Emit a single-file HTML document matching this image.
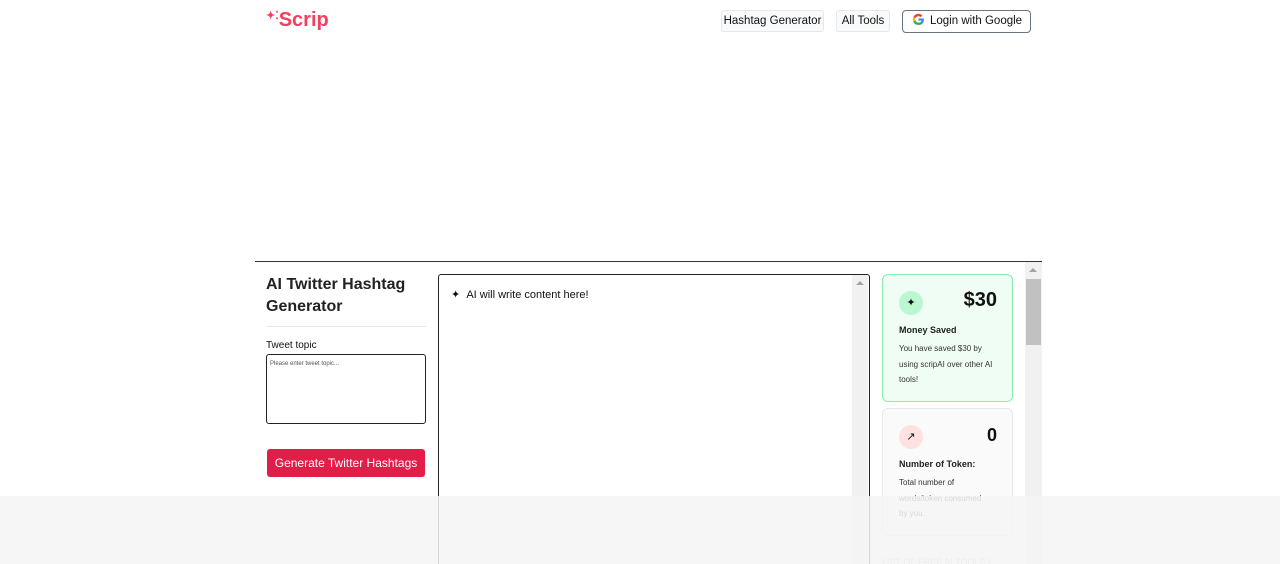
<!DOCTYPE html>
<html><head><style>
*{box-sizing:border-box;margin:0;padding:0}
html,body{width:1280px;height:564px;overflow:hidden}
body{background:#fff;font-family:"Liberation Sans",sans-serif;color:#111;position:relative}
.abs{position:absolute}
.btn{position:absolute;top:10px;height:22px;border:1px solid #e5e7eb;background:#f9fafb;border-radius:3px;font-size:11.5px;line-height:20px;text-align:center;color:#111;white-space:nowrap}
.card{position:absolute;left:882px;width:131px;border-radius:6px;padding:16px}
</style></head><body>
<div class="abs" style="left:266px;top:9px;color:#f43f5e;font-size:20px;font-weight:bold;white-space:nowrap"><span style="font-size:11px;vertical-align:top">✦⁚</span>Scrip</div>
<div class="btn" style="left:721px;width:103px">Hashtag Generator</div>
<div class="btn" style="left:836px;width:54px">All Tools</div>
<div class="btn" style="left:902px;width:129px;height:23px;border:1px solid #6b7280;border-radius:4px;background:#fff;text-align:left;padding-left:9px"><svg width="13" height="13" viewBox="0 0 24 24" style="vertical-align:-2px;margin-right:5px"><path d="M22 12.2c0-.7-.1-1.4-.2-2H12v3.9h5.6a4.8 4.8 0 0 1-2.1 3.1v2.6h3.4c2-1.8 3.1-4.5 3.1-7.6z" fill="#4285F4"/><path d="M12 22c2.8 0 5.2-.9 6.9-2.5l-3.4-2.6c-.9.6-2.1 1-3.5 1-2.7 0-5-1.8-5.8-4.3H2.7v2.7A10 10 0 0 0 12 22z" fill="#34A853"/><path d="M6.2 13.6a6 6 0 0 1 0-3.8V7.1H2.7a10 10 0 0 0 0 9z" fill="#FBBC05"/><path d="M12 6c1.5 0 2.9.5 4 1.5l3-3A10 10 0 0 0 2.7 7.1l3.5 2.7C7 7.8 9.3 6 12 6z" fill="#EA4335"/></svg>Login with Google</div>

<div class="abs" style="left:255px;top:261px;width:787px;height:1px;background:#333"></div>
<div class="abs" style="left:266px;top:274px;font-size:16px;font-weight:bold;line-height:22px;color:#222">AI Twitter Hashtag<br>Generator</div>
<div class="abs" style="left:266px;top:326px;width:160px;height:1px;background:#e5e7eb"></div>
<div class="abs" style="left:266px;top:340px;font-size:10px">Tweet topic</div>
<div class="abs" style="left:266px;top:354px;width:160px;height:70px;border:1px solid #222;border-radius:3px;font-size:6px;color:#555;padding:6px 3px">Please enter tweet topic...</div>
<div class="abs" style="left:267px;top:449px;width:158px;height:28px;background:#e11d48;border-radius:3px;color:#fff;font-size:12px;text-align:center;line-height:28px">Generate Twitter Hashtags</div>

<div class="abs" style="left:438px;top:274px;width:432px;height:290px;border:1px solid #222;border-bottom:0;border-radius:3px 3px 0 0"></div>
<div class="abs" style="left:852px;top:275px;width:16px;height:289px;background:#f1f1f1"></div>
<div class="abs" style="left:856px;top:281px;width:0;height:0;border:4px solid transparent;border-bottom:4px solid #a3a3a3;border-top:0"></div>
<div class="abs" style="left:451px;top:288px;font-size:11px">✦&nbsp;&nbsp;AI will write content here!</div>

<div class="card" style="top:274px;height:128px;background:#f0fdf4;border:1px solid #86efac">
<div class="abs" style="left:16px;top:16px;width:24px;height:24px;border-radius:50%;background:#bbf7d0;text-align:center;line-height:24px;font-size:11px">✦</div>
<div class="abs" style="right:15px;top:14px;font-size:20px;font-weight:bold">$30</div>
<div class="abs" style="left:16px;top:50px;font-size:9px;font-weight:bold;color:#222">Money Saved</div>
<div class="abs" style="left:16px;top:66px;font-size:8px;line-height:15.5px;color:#333;width:96px">You have saved $30 by using scripAI over other AI tools!</div></div>
<div class="card" style="top:408px;height:128px;background:#fafafa;border:1px solid #e5e7eb">
<div class="abs" style="left:16px;top:16px;width:24px;height:24px;border-radius:50%;background:#fee2e2;text-align:center;line-height:24px;font-size:11px">↗</div>
<div class="abs" style="right:15px;top:16px;font-size:18px;font-weight:bold">0</div>
<div class="abs" style="left:16px;top:50px;font-size:9px;font-weight:bold;color:#222">Number of Token:</div>
<div class="abs" style="left:16px;top:66px;font-size:8px;line-height:15.5px;color:#333;width:92px">Total number of words/token consumed by you.</div></div>
<div class="abs" style="left:882px;top:557px;font-size:9px;color:#bbb;white-space:nowrap">LIST OF FREE AI TOOLS |</div>

<div class="abs" style="left:1025px;top:262px;width:17px;height:302px;background:#f1f1f1"></div>
<div class="abs" style="left:1029px;top:268px;width:0;height:0;border:4px solid transparent;border-bottom:4px solid #a3a3a3;border-top:0"></div>
<div class="abs" style="left:1026px;top:279px;width:15px;height:66px;background:#c1c1c1"></div>

<div class="abs" style="left:0;top:496px;width:1280px;height:68px;background:rgba(245,245,245,0.85)"></div>
</body></html>
